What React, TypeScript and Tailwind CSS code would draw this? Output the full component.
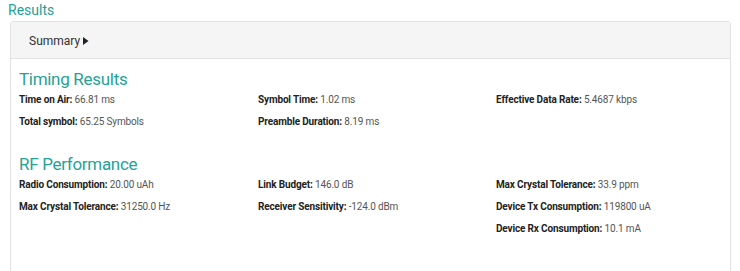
const TIMING = [
  ['Time on Air', '66.81 ms'],
  ['Symbol Time', '1.02 ms'],
  ['Effective Data Rate', '5.4687 kbps'],
  ['Total symbol', '65.25 Symbols'],
  ['Preamble Duration', '8.19 ms'],
]

const RF = [
  ['Radio Consumption', '20.00 uAh'],
  ['Link Budget', '146.0 dB'],
  ['Max Crystal Tolerance', '33.9 ppm'],
  ['Max Crystal Tolerance', '31250.0 Hz'],
  ['Receiver Sensitivity', '-124.0 dBm'],
  ['Device Tx Consumption', '119800 uA'],
  [null, null],
  [null, null],
  ['Device Rx Consumption', '10.1 mA'],
]

function Grid({ rows }: { rows: (string | null)[][] }) {
  return (
    <div className="grid grid-cols-[239px_238px_1fr] gap-y-[9px]">
      {rows.map(([label, value], i) => (
        <div key={i} className="h-[13px] text-[10px] leading-[13px] tracking-[-0.15px] text-[#555]">
          {label && (
            <>
              <span className="font-bold text-[#222]">{label}:</span> {value}
            </>
          )}
        </div>
      ))}
    </div>
  )
}

export default function App() {
  return (
    <div className="w-[740px] h-[271px] overflow-hidden bg-white" style={{ fontFamily: 'Roboto, "Open Sans", sans-serif' }}>
      <div className="px-2 pt-[2px] text-[14px] leading-[16px] text-[#26a195]">Results</div>
      <div className="ml-[10px] mr-[9px] mt-[3px] border border-[#e2e2e2] rounded-t-[3px] h-[260px]">
        <div className="h-[37px] bg-[#f5f5f5] border-b border-[#e2e2e2] flex items-center pl-[18px] pt-[2px] text-[12px] text-[#333]">
          Summary
          <svg width="6" height="8" viewBox="0 0 6 8" className="ml-[3px]">
            <path d="M0 0 L5.5 4 L0 8 Z" fill="#222" />
          </svg>
        </div>
        <div className="pl-[8px] pr-2">
          <div className="mt-[9px] text-[17px] leading-[22px] tracking-[-0.3px] text-[#26a195]">Timing Results</div>
          <div className="mt-[3px]">
            <Grid rows={TIMING} />
          </div>
          <div className="mt-[25px] text-[17px] leading-[22px] tracking-[-0.3px] text-[#26a195]">RF Performance</div>
          <div className="mt-[3px]">
            <Grid rows={RF} />
          </div>
        </div>
      </div>
    </div>
  )
}
